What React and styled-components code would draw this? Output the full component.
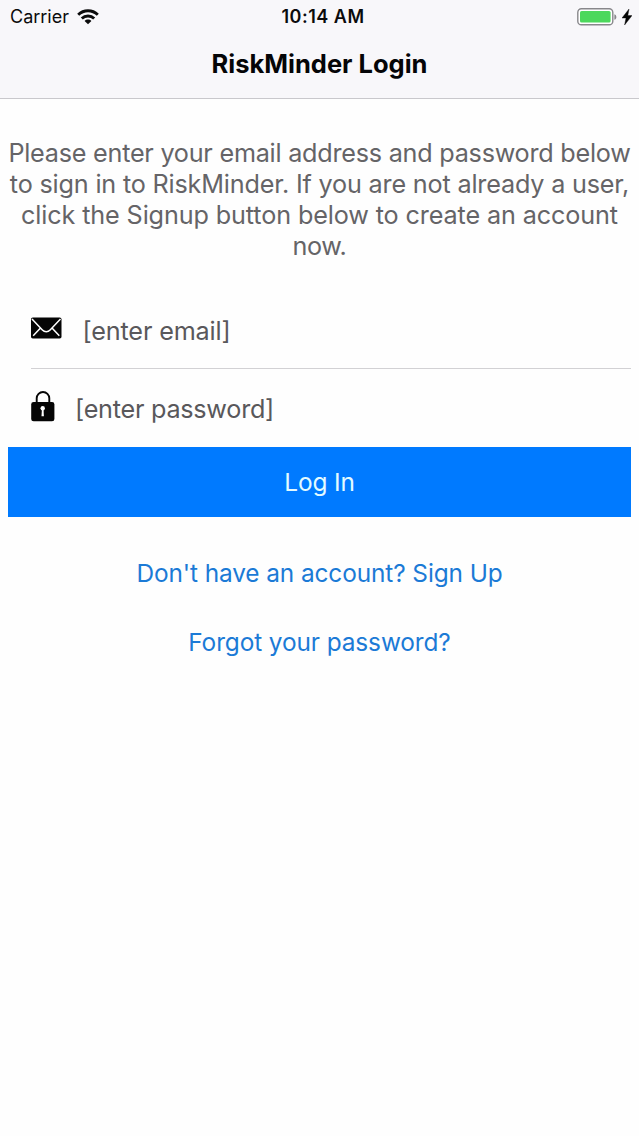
import React from 'react';
import styled, { createGlobalStyle } from 'styled-components';

const GlobalStyle = createGlobalStyle`
  * { box-sizing: border-box; }
  html, body { margin: 0; padding: 0; background: #fefefe; }
  body { font-family: Inter, "Liberation Sans", sans-serif; }
`;

const Screen = styled.div`
  width: 639px;
  height: 1136px;
  overflow: hidden;
  background: #fefefe;
`;

const Header = styled.header`
  height: 99px;
  background: #f8f7fa;
  border-bottom: 1px solid #c9c8cc;
`;

const StatusBar = styled.div`
  display: grid;
  grid-template-columns: 1fr auto 1fr;
  align-items: center;
  height: 34px;
  padding: 0 7px 1px 10px;
  color: #0b0b0c;
`;

const StatusGroup = styled.div`
  display: flex;
  align-items: center;
  justify-content: ${(p) => (p.$end ? 'flex-end' : 'flex-start')};
  gap: ${(p) => p.$gap}px;
`;

const Carrier = styled.span`
  font-size: 18px;
  letter-spacing: ${(p) => p.$track}px;
`;

const Clock = styled.span`
  font-size: 18px;
  font-weight: 600;
  letter-spacing: ${(p) => p.$track}px;
  margin-left: 4px;
`;

const Title = styled.h1`
  margin: 0;
  padding-top: 14px;
  text-align: center;
  font-size: 25.5px;
  font-weight: 700;
  line-height: 32px;
  letter-spacing: ${(p) => p.$track}px;
  color: #050507;
`;

const Content = styled.main`
  display: flex;
  flex-direction: column;
  padding: 38px 8px 0;
`;

const Intro = styled.p`
  margin: 0 -8px;
  padding-top: 0.5px;
  text-align: center;
  color: #656467;
  font-size: 25.2px;
  line-height: 31.33px;
`;

const Line = styled.span`
  display: block;
  white-space: nowrap;
  letter-spacing: ${(p) => p.$track}px;
`;

const Form = styled.form`
  display: flex;
  flex-direction: column;
  margin-top: 30.5px;
`;

const Field = styled.label`
  display: flex;
  align-items: center;
  gap: ${(p) => p.$gap}px;
  height: ${(p) => p.$height}px;
  margin-left: 23px;
  border-bottom: ${(p) => (p.$divided ? '1px solid #d2d1d4' : 'none')};
`;

const Placeholder = styled.span`
  padding-top: ${(p) => p.$drop}px;
  font-size: 25.2px;
  line-height: 32px;
  color: #59585b;
  white-space: nowrap;
  letter-spacing: ${(p) => p.$track}px;
`;

const LoginButton = styled.button`
  height: 69.5px;
  border: 0;
  padding: 0;
  background: #007aff;
  color: #e4fbff;
  font: 400 24.4px/32px Inter, "Liberation Sans", sans-serif;
  letter-spacing: ${(p) => p.$track}px;
`;

const Links = styled.nav`
  display: flex;
  flex-direction: column;
  align-items: center;
  gap: 37px;
  margin-top: 40.5px;
`;

const TextLink = styled.a`
  font-size: 24.4px;
  line-height: 32px;
  color: #1b7ad6;
  white-space: nowrap;
  letter-spacing: ${(p) => p.$track}px;
`;

const Wifi = () => (
  <svg width="22" height="16" viewBox="0 0 22 16" fill="none" stroke="#0b0b0c" strokeWidth="2.9">
    <path d="M1.2 5.8C6.7.4 15.3.4 20.8 5.8" />
    <path d="M4.8 9.5c3.4-3.4 9-3.4 12.4 0" />
    <path d="M11 15.2 7.6 11.9c1.9-1.8 4.9-1.8 6.8 0Z" fill="#0b0b0c" stroke="none" />
  </svg>
);

const Battery = () => (
  <svg width="40" height="18" viewBox="0 0 40 18">
    <rect x="0.8" y="0.8" width="35" height="16" rx="3.6" fill="#fff" stroke="#88878b" strokeWidth="1.4" />
    <rect x="3" y="3" width="30.6" height="11.6" rx="1.6" fill="#4cd85c" />
    <path d="M37.4 6.2c2.6.8 2.6 4.8 0 5.6Z" fill="#88878b" />
  </svg>
);

const Bolt = () => (
  <svg width="10" height="16" viewBox="0 0 10 16">
    <path d="M7 0 0 9h4L2.6 16 10 6.6H5.8Z" fill="#050505" stroke="#050505" strokeWidth="0.4" />
  </svg>
);

const Mail = () => (
  <svg width="31" height="22" viewBox="0 0 31 22">
    <rect x="0" y="0.5" width="30.5" height="21" rx="1.8" fill="#050505" />
    <path d="M1 2 11.4 13c2.1 2.2 5.6 2.2 7.7 0L29.5 2M2.2 18.8l7.3-7.9M28.3 18.8 21 10.9" fill="none" stroke="#fff" strokeWidth="1.5" />
  </svg>
);

const Lock = () => (
  <svg width="24" height="31" viewBox="0 0 24 31">
    <path d="M5.7 12V7.3a6.3 6.3 0 0 1 12.6 0V12" fill="none" stroke="#050505" strokeWidth="1.9" />
    <rect x="0.2" y="11" width="23.2" height="19.3" rx="2.4" fill="#050505" />
    <circle cx="11.7" cy="17.3" r="2.2" fill="#fff" />
    <path d="M10.9 18h1.6l.4 7.3h-2.4Z" fill="#fff" />
  </svg>
);

const IconSlot = styled.span`
  display: flex;
  flex: none;
  margin-bottom: ${(p) => p.$lift}px;
`;

export default function App() {
  return (
    <Screen>
      <GlobalStyle />
      <Header>
        <StatusBar>
          <StatusGroup $gap={8}>
            <Carrier $track={0}>Carrier</Carrier>
            <Wifi />
          </StatusGroup>
          <Clock $track={0.5}>10:14 AM</Clock>
          <StatusGroup $end $gap={5}>
            <Battery />
            <Bolt />
          </StatusGroup>
        </StatusBar>
        <Title $track={0}>RiskMinder Login</Title>
      </Header>
      <Content>
        <Intro>
          <Line $track={-0.24}>Please enter your email address and password below</Line>
          <Line $track={-0.18}>to sign in to RiskMinder. If you are not already a user,</Line>
          <Line $track={-0.12}>click the Signup button below to create an account</Line>
          <Line $track={-0.4}>now.</Line>
        </Intro>
        <Form>
          <Field $divided $gap={20.5} $height={76}>
            <IconSlot $lift={6}><Mail /></IconSlot>
            <Placeholder $drop={0} $track={-0.15}>[enter email]</Placeholder>
          </Field>
          <Field $gap={20} $height={78}>
            <IconSlot $lift={3}><Lock /></IconSlot>
            <Placeholder $drop={2} $track={-0.25}>[enter password]</Placeholder>
          </Field>
          <LoginButton type="button" $track={-0.15}>Log In</LoginButton>
        </Form>
        <Links>
          <TextLink $track={-0.1}>Don't have an account? Sign Up</TextLink>
          <TextLink $track={-0.1}>Forgot your password?</TextLink>
        </Links>
      </Content>
    </Screen>
  );
}
